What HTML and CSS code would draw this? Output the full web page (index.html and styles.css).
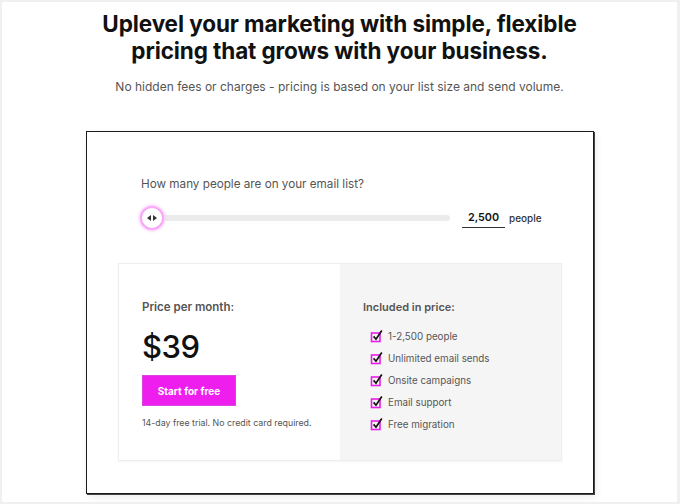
FILE: index.html
```html
<!DOCTYPE html>
<html>
<head>
<meta charset="utf-8">
<link rel="stylesheet" href="styles.css">
</head>
<body>
<div class="page">
  <h1 class="title">Uplevel your marketing with simple, flexible<br>pricing that grows with your business.</h1>
  <p class="subtitle">No hidden fees or charges - pricing is based on your list size and send volume.</p>
  <div class="card">
    <p class="question">How many people are on your email list?</p>
    <div class="slider-row">
      <div class="slider">
        <div class="track"></div>
        <div class="thumb"><svg class="arrows" viewBox="0 0 10 6" width="10" height="6"><path d="M0 3 L4 0 L4 6 Z M6 0 L10 3 L6 6 Z" fill="#333"/></svg></div>
      </div>
      <div class="count"><span class="count-value">2,500</span></div>
      <span class="count-unit">people</span>
    </div>
    <div class="panel">
      <div class="price-col">
        <h3 class="label">Price per month:</h3>
        <div class="price">$39</div>
        <a class="cta">Start for free</a>
        <p class="note">14-day free trial. No credit card required.</p>
      </div>
      <div class="incl-col">
        <h3 class="label label-sm">Included in price:</h3>
        <ul class="features">
          <li><svg class="check" viewBox="0 0 14 14" width="14" height="14"><rect x="1.5" y="4" width="8.5" height="8.5" fill="none" stroke="#e81ee8" stroke-width="1.6"/><path d="M3.6 7.4 L6 10.2 L11.8 1.6" fill="none" stroke="#111" stroke-width="1.7"/></svg>1-2,500 people</li>
          <li><svg class="check" viewBox="0 0 14 14" width="14" height="14"><rect x="1.5" y="4" width="8.5" height="8.5" fill="none" stroke="#e81ee8" stroke-width="1.6"/><path d="M3.6 7.4 L6 10.2 L11.8 1.6" fill="none" stroke="#111" stroke-width="1.7"/></svg>Unlimited email sends</li>
          <li><svg class="check" viewBox="0 0 14 14" width="14" height="14"><rect x="1.5" y="4" width="8.5" height="8.5" fill="none" stroke="#e81ee8" stroke-width="1.6"/><path d="M3.6 7.4 L6 10.2 L11.8 1.6" fill="none" stroke="#111" stroke-width="1.7"/></svg>Onsite campaigns</li>
          <li><svg class="check" viewBox="0 0 14 14" width="14" height="14"><rect x="1.5" y="4" width="8.5" height="8.5" fill="none" stroke="#e81ee8" stroke-width="1.6"/><path d="M3.6 7.4 L6 10.2 L11.8 1.6" fill="none" stroke="#111" stroke-width="1.7"/></svg>Email support</li>
          <li><svg class="check" viewBox="0 0 14 14" width="14" height="14"><rect x="1.5" y="4" width="8.5" height="8.5" fill="none" stroke="#e81ee8" stroke-width="1.6"/><path d="M3.6 7.4 L6 10.2 L11.8 1.6" fill="none" stroke="#111" stroke-width="1.7"/></svg>Free migration</li>
        </ul>
      </div>
    </div>
  </div>
</div>
</body>
</html>
```

FILE: styles.css
```css
html { background: #f0f0f0; }
body {
  margin: 0;
  padding: 2px 3px 2px 2px;
  font-family: "Inter", "Noto Sans", sans-serif;
}
.page {
  background: #fff;
  height: 500px;
  overflow: hidden;
  display: flex;
  flex-direction: column;
  align-items: center;
}
.title {
  margin: 8px 0 0;
  font-size: 22.5px;
  line-height: 27px;
  font-weight: 700;
  text-align: center;
  color: #111;
  letter-spacing: -0.1px;
}
.subtitle {
  margin: 15px 0 0;
  font-size: 12px;
  line-height: 16px;
  color: #555;
  text-align: center;
}
.card {
  margin: 36px 0 0 1px;
  width: 508px;
  height: 363px;
  box-sizing: border-box;
  border: 1px solid #1a1a1a;
  box-shadow: 1px 1px 0 #444, 2px 3px 8px rgba(0,0,0,0.08);
  padding: 44px 31px 0 31px;
}
.question {
  margin: 0 0 0 23px;
  font-size: 11.7px;
  line-height: 16px;
  color: #555;
}
.slider-row {
  display: flex;
  align-items: center;
  margin: 13px 0 0 23px;
  height: 26px;
}
.slider {
  position: relative;
  width: 309px;
  height: 26px;
}
.track {
  position: absolute;
  left: 8px;
  right: 0;
  top: 10px;
  height: 6px;
  border-radius: 3px;
  background: #ebebeb;
}
.thumb {
  position: absolute;
  left: -1px;
  top: 1px;
  width: 20px;
  height: 20px;
  border-radius: 50%;
  background: #fff;
  border: 2px solid #f7a8f7;
  box-shadow: 0 0 3px 1px #fbc4fb;
  display: flex;
  align-items: center;
  justify-content: center;
}
.arrows {
  display: block;
}
.count {
  align-self: flex-start;
  width: 43px;
  margin-left: 12px;
  border-bottom: 1px solid #333;
  text-align: center;
  height: 22px;
}
.count-value {
  font-size: 10.8px;
  font-weight: 600;
  color: #111;
  line-height: 22px;
}
.count-unit {
  margin-left: 4px;
  font-size: 10px;
  color: #333;
  font-weight: 500;
}
.panel {
  margin-top: 32px;
  display: grid;
  grid-template-columns: 221px 221px;
  height: 196px;
  border: 1px solid #eee;
  box-shadow: 0 1px 2px rgba(0,0,0,0.05);
}
.price-col {
  background: #fff;
  padding: 36px 0 0 23px;
}
.incl-col {
  background: #f5f5f5;
  padding: 36px 0 0 23px;
}
.label {
  margin: 0;
  font-size: 11.5px;
  line-height: 14px;
  font-weight: 600;
  color: #555;
}
.label-sm {
  font-size: 11px;
}
.price {
  margin-top: 15px;
  font-size: 31px;
  line-height: 36px;
  font-weight: 500;
  color: #111;
  letter-spacing: -0.5px;
}
.cta {
  display: inline-flex;
  align-items: center;
  justify-content: center;
  margin-top: 10px;
  width: 94px;
  height: 31px;
  box-sizing: border-box;
  background: #ee1eee;
  border: 1px solid #dd44dd;
  color: #fff;
  font-size: 10px;
  font-weight: 700;
}
.note {
  margin: 11px 0 0;
  font-size: 8.8px;
  line-height: 12px;
  color: #555;
}
.features {
  list-style: none;
  margin: 11px 0 0 7px;
  padding: 0;
}
.features li {
  display: flex;
  align-items: center;
  height: 22px;
  font-size: 9.8px;
  color: #555;
}
.check {
  margin-right: 4px;
  flex: none;
}
```
